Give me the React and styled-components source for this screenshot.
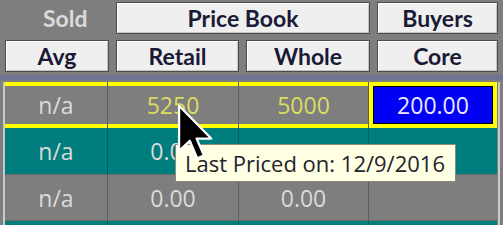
import styled, { createGlobalStyle } from 'styled-components';

const GlobalStyle = createGlobalStyle`
  html, body {
    margin: 0;
    padding: 0;
    background: #7e7e7e;
    overflow: hidden;
  }
`;

/* Frame */
const Frame = styled.div`
  position: relative;
  width: 503px;
  height: 225px;
  background: #7e7e7e;
  overflow: hidden;
`;

/* Header with column buttons */
const HeaderGrid = styled.div`
  display: grid;
  grid-template-columns: 104px 123px 124px 121px;
  grid-auto-rows: 32px;
  column-gap: 7px;
  row-gap: 6px;
  padding: 2px 0 0 5px;
`;

const SoldLabel = styled.div`
  display: flex;
  align-items: center;
  padding-left: 38px;
  font-family: Lato, 'Liberation Sans', sans-serif;
  font-weight: 700;
  font-size: 23px;
  color: #dadada;
`;

const HeadButton = styled.div`
  grid-column: ${props => (props.span ? `span ${props.span}` : 'auto')};
  display: flex;
  align-items: center;
  justify-content: center;
  box-sizing: border-box;
  background: #efefef;
  border: 1px solid #4c4c4c;
  box-shadow: inset 1px 1px 0 #ffffff, inset -1px -1px 0 #c4c4c4;
  font-family: Lato, 'Liberation Sans', sans-serif;
  font-weight: 700;
  font-size: 23px;
  color: #1a1a36;
`;

const Divider = styled.div`
  height: 5px;
  margin-top: 3px;
  background: #6d7391;
`;

/* Data grid */
const Table = styled.div`
  margin-top: 2px;
  margin-left: 3px;
  width: 497px;
  box-sizing: border-box;
  border-left: 2px solid #c9c9c9;
  border-right: 2px solid #c9c9c9;
  padding-right: 1px;
`;

const Row = styled.div`
  display: grid;
  grid-template-columns: 102px 130px 129px 128px;
  column-gap: 1px;
  height: ${props => props.h || 46}px;
  background: ${props => (props.tone === 'teal' ? '#005f5f' : '#5e5e5e')};
`;

const Cell = styled.div`
  display: flex;
  align-items: center;
  justify-content: center;
  box-sizing: border-box;
  background: ${props =>
    props.current ? '#0000f4' : props.tone === 'teal' ? '#007d7d' : '#7e7e7e'};
  border-top: ${props => (props.selected ? '4px solid #ffff00' : 'none')};
  border-bottom: ${props => (props.selected ? '4px solid #ffff00' : '1px solid #6a6a6a')};
  border-left: ${props => (props.current ? '4px solid #ffff00' : 'none')};
  border-right: ${props => (props.current ? '4px solid #ffff00' : 'none')};
  box-shadow: ${props => (props.current ? 'inset 0 0 0 1px #000' : 'none')};
  font-family: 'Open Sans', 'Noto Sans', sans-serif;
  font-size: 23px;
  color: ${props =>
    props.current ? '#eceaff' : props.hot ? '#dcdc62' : '#dadada'};
`;

/* Tooltip and pointer */
const Tooltip = styled.div`
  position: absolute;
  left: 175px;
  top: 144px;
  width: 281px;
  height: 38px;
  box-sizing: border-box;
  padding-left: 9px;
  background: #ffffe3;
  border: 1px solid #8a8a7a;
  font-family: 'Open Sans', 'Noto Sans', sans-serif;
  font-size: 22px;
  line-height: 36px;
  color: #23232f;
  white-space: nowrap;
`;

const Pointer = styled.svg`
  position: absolute;
  left: 176px;
  top: 103px;
`;

const rows = [
  { tone: 'gray', selected: true, cells: ['n/a', '5250', '5000', '200.00'] },
  { tone: 'teal', cells: ['n/a', '0.00', '', ''] },
  { tone: 'gray', cells: ['n/a', '0.00', '0.00', ''] },
  { tone: 'teal', cells: ['', '', '', ''] },
];

function App() {
  return (
    <Frame>
      <GlobalStyle />
      <HeaderGrid>
        <SoldLabel>Sold</SoldLabel>
        <HeadButton span={2}>Price Book</HeadButton>
        <HeadButton>Buyers</HeadButton>
        <HeadButton>Avg</HeadButton>
        <HeadButton>Retail</HeadButton>
        <HeadButton>Whole</HeadButton>
        <HeadButton>Core</HeadButton>
      </HeaderGrid>
      <Divider />
      <Table>
        {rows.map((row, i) => (
          <Row key={i} tone={row.tone} h={i === 1 ? 47 : 46}>
            {row.cells.map((text, j) => (
              <Cell
                key={j}
                tone={row.tone}
                selected={row.selected}
                current={row.selected && j === 3}
                hot={row.selected && (j === 1 || j === 2)}
              >
                {text}
              </Cell>
            ))}
          </Row>
        ))}
      </Table>
      <Tooltip>Last Priced on: 12/9/2016</Tooltip>
      <Pointer width="40" height="62" viewBox="0 0 14 22">
        <path
          d="M1 1 L1 17 L4.8 13.4 L7.4 19.6 L9.8 18.6 L7.2 12.6 L12.4 12.6 Z"
          fill="#000"
          stroke="#fff"
          strokeWidth="0.8"
          strokeLinejoin="round"
        />
      </Pointer>
    </Frame>
  );
}

export default App;
